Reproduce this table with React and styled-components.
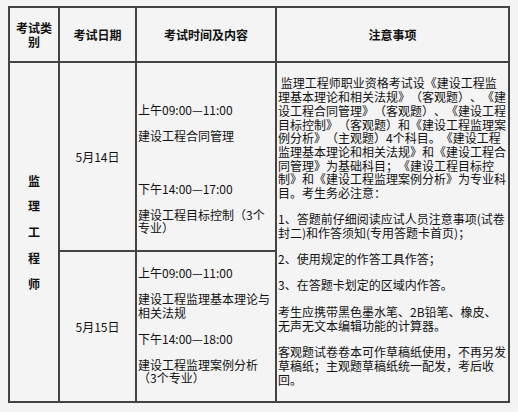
import React from 'react'
import styled, { createGlobalStyle } from 'styled-components'

const GlobalStyle = createGlobalStyle`
    html, body {
        background: #f4f4f4;
    }
    body {
        margin: 6px 8px;
        font-family: "Noto Sans CJK SC", "Liberation Sans", sans-serif;
        font-size: 12px;
        color: #111;
        text-spacing-trim: space-all;
    }
`

const Table = styled.table`
    width: 500px;
    table-layout: fixed;
    border-collapse: collapse;
    border: 2px solid #333;
`

const HeadRow = styled.tr`
    height: 55px;
`

const BodyRow = styled.tr`
    height: ${p => p.h}px;
`

const Th = styled.th`
    border: 2px solid #444;
    padding: 0 1px;
    font-weight: bold;
    line-height: 13.4px;
    text-align: center;
    vertical-align: middle;
`

const Td = styled.td`
    border: 2px solid #444;
    padding: ${p => p.pad || '0 1px'};
    vertical-align: ${p => p.valign || 'middle'};
    text-align: ${p => p.align || 'left'};
    line-height: 13.5px;
`

const Category = styled.div`
    font-weight: bold;
    line-height: 25.8px;
    text-align: center;
`

const Session = styled.p`
    margin: 0 0 ${p => p.gap || 12.5}px;
    white-space: nowrap;
    line-height: 13.5px;

    &:last-child {
        margin-bottom: 0;
    }
`

const Note = styled.p`
    margin: 0 0 12px;
    white-space: pre;
    line-height: ${p => (p.tight ? 13.7 : 14.2)}px;

    &:last-child {
        margin-bottom: 0;
    }
`

const notes = [
    [
        ' 监理工程师职业资格考试设《建设工程监',
        '理基本理论和相关法规》（客观题）、《建',
        '设工程合同管理》（客观题）、《建设工程',
        '目标控制》（客观题）和《建设工程监理案',
        '例分析》（主观题）4个科目。《建设工程',
        '监理基本理论和相关法规》和《建设工程合',
        '同管理》为基础科目；《建设工程目标控',
        '制》和《建设工程监理案例分析》为专业科',
        '目。考生务必注意：',
    ],
    ['1、答题前仔细阅读应试人员注意事项(试卷', '封二)和作答须知(专用答题卡首页)；'],
    ['2、使用规定的作答工具作答；'],
    ['3、在答题卡划定的区域内作答。'],
    ['考生应携带黑色墨水笔、2B铅笔、橡皮、', '无声无文本编辑功能的计算器。'],
    ['客观题试卷卷本可作草稿纸使用，不再另发', '草稿纸；主观题草稿纸统一配发，考后收', '回。'],
]

const Lines = ({ lines }) =>
    lines.map((l, i) => (
        <React.Fragment key={i}>
            {i > 0 && <br />}
            {l}
        </React.Fragment>
    ))

const App = () => {
    return (
        <>
            <GlobalStyle />
            <Table>
                <colgroup>
                    <col style={{ width: 50 }} />
                    <col style={{ width: 77 }} />
                    <col style={{ width: 140 }} />
                    <col style={{ width: 233 }} />
                </colgroup>
                <tbody>
                    <HeadRow>
                        <Th>考试类<br />别</Th>
                        <Th>考试日期</Th>
                        <Th>考试时间及内容</Th>
                        <Th>注意事项</Th>
                    </HeadRow>
                    <BodyRow h={189}>
                        <Td rowSpan={2} align="center">
                            <Category>监<br />理<br />工<br />程<br />师</Category>
                        </Td>
                        <Td align="center">5月14日</Td>
                        <Td valign="top" pad="40px 1px 0">
                            <Session>上午09:00—11:00</Session>
                            <Session gap={39}>建设工程合同管理</Session>
                            <Session>下午14:00—17:00</Session>
                            <Session>建设工程目标控制（3个<br />专业）</Session>
                        </Td>
                        <Td rowSpan={2}>
                            {notes.map((n, i) => (
                                <Note key={i} tight={i === 0}>
                                    <Lines lines={n} />
                                </Note>
                            ))}
                        </Td>
                    </BodyRow>
                    <BodyRow h={151}>
                        <Td align="center">5月15日</Td>
                        <Td valign="top" pad="14px 1px 0">
                            <Session>上午09:00—11:00</Session>
                            <Session>建设工程监理基本理论与<br />相关法规</Session>
                            <Session> 下午14:00—18:00</Session>
                            <Session>建设工程监理案例分析<br /> （3个专业）</Session>
                        </Td>
                    </BodyRow>
                </tbody>
            </Table>
        </>
    )
}

export default App
